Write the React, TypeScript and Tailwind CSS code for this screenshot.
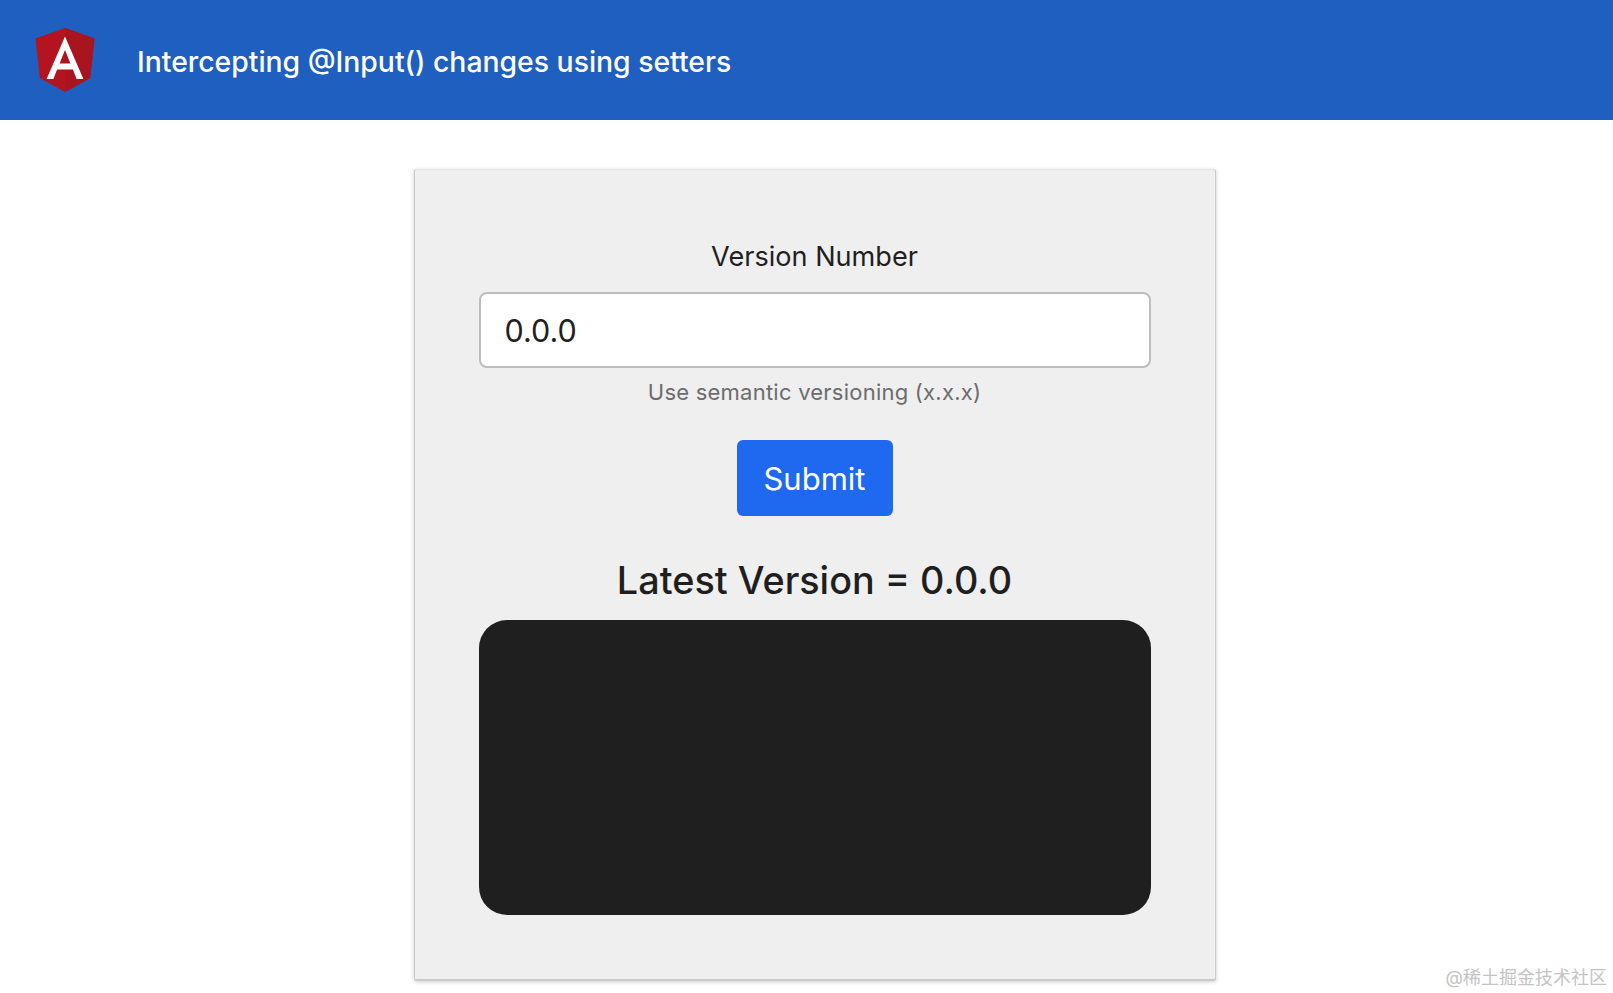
const FONT = "font-['Inter','Noto_Sans_CJK_SC',sans-serif]"

function AngularLogo() {
  return (
    <svg width="60" height="64" viewBox="0 0 62 64" preserveAspectRatio="none" className="shrink-0">
      <path d="M31 0 L0.5 10.5 L5 50 L31 64 L57 50 L61.5 10.5 Z" fill="#b3141f" />
      <path d="M31 0 L31 64 L57 50 L61.5 10.5 Z" fill="#a8151f" />
      <path
        d="M31 8.5 L12 51 L19 51 L22.8 41.5 L39.2 41.5 L43 51 L50 51 Z M31 22 L36.6 35.5 L25.4 35.5 Z"
        fill="#ffffff"
        fillRule="evenodd"
      />
    </svg>
  )
}

export default function App() {
  return (
    <div className={`relative h-[993px] overflow-hidden bg-white ${FONT}`}>
      <header className="flex h-[120px] items-center bg-[#1f5fbf] pl-[35px]">
        <AngularLogo />
        <h1 className="ml-[42px] pt-[4px] text-[28.35px] font-medium text-white">
          Intercepting @Input() changes using setters
        </h1>
      </header>

      <main className="flex justify-center pt-[49px] pl-[16px]">
        <div className="flex h-[812px] w-[802px] flex-col items-center rounded-[2px] border border-b-2 border-[#c9c9c9] border-t-[#e4e4e4] bg-[#f0eff0] px-[64px] pt-[70px] shadow-[0_1px_4px_rgba(0,0,0,0.2)]">
          <label className="text-[27.1px] leading-[34px] text-[#1f1f1f]">Version Number</label>
          <input
            type="text"
            readOnly
            value="0.0.0"
            className="mt-[18px] h-[76px] w-full rounded-[8px] border-2 border-[#bdbdbd] bg-white px-[24px] pt-[1px] text-[30.5px] text-[#212121] outline-none"
          />
          <p className="mt-[10px] text-[22px] leading-[28px] tracking-[0.23px] text-[#6c6c6c]">
            Use semantic versioning (x.x.x)
          </p>
          <button
            type="button"
            className="mt-[34px] h-[76px] w-[156px] rounded-[6px] bg-[#1f69f0] pt-[3px] text-[31px] text-white"
          >
            Submit
          </button>
          <h2 className="mt-[39px] text-[37.8px] leading-[50px] font-medium text-[#1f1f1f]">
            Latest Version = 0.0.0
          </h2>
          <div className="mt-[15px] h-[295px] w-[672px] shrink-0 rounded-[28px] bg-[#1f1f1f]" />
        </div>
      </main>

      <span className="absolute right-[6px] bottom-[3px] text-[18px] leading-[24px] text-[#c4c4c4]">
        @稀土掘金技术社区
      </span>
    </div>
  )
}
